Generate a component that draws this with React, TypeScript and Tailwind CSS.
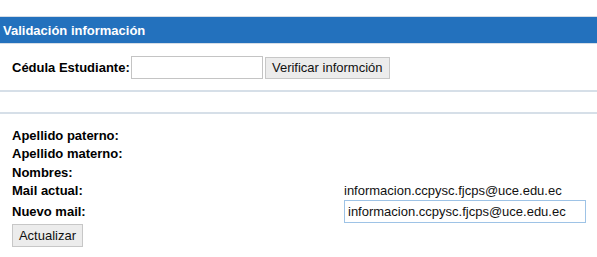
import React from "react";

export default function App() {
  const labels = ["Apellido paterno:", "Apellido materno:", "Nombres:", "Mail actual:"];
  return (
    <div className="w-[597px] h-[257px] bg-white text-[13px] leading-[15px] text-black" style={{ fontFamily: '"Liberation Sans", Arial, sans-serif' }}>
      <div className="h-[16px]" />
      <div className="border-t border-b border-[#d5dde6] bg-[#2371bd] h-[28px] flex items-center px-[3px]">
        <span className="font-bold text-white">Validación información</span>
      </div>
      <div className="h-[46px] flex items-center pl-[12px] pt-[1px]">
        <span className="font-bold">Cédula Estudiante:</span>
        <input className="ml-[1px] w-[132px] h-[23px] border border-[#c4c4c4] bg-white outline-none" />
        <button className="ml-[2px] w-[125px] h-[22px] border border-[#c7c7c7] bg-[#ececec] text-[13px] text-[#111]">Verificar informción</button>
      </div>
      <div className="h-[2px] bg-[#d6dfe8]" />
      <div className="h-[20px]" />
      <div className="h-[2px] bg-[#d6dfe8]" />
      <div className="pl-[12px] pt-[12px] flex flex-col">
        {labels.map((l, i) => (
          <div key={l} className="flex h-[18.5px] items-center">
            <span className="font-bold w-[332px]">{l}</span>
            {i === 3 && <span className="text-[#111]">informacion.ccpysc.fjcps@uce.edu.ec</span>}
          </div>
        ))}
        <div className="flex items-center h-[23px]">
          <span className="font-bold w-[332px]">Nuevo mail:</span>
          <input
            className="w-[242px] h-[23px] border border-[#9ec3e6] px-[3px] text-[13px] text-[#111] outline-none"
            defaultValue="informacion.ccpysc.fjcps@uce.edu.ec"
            style={{ fontFamily: '"Liberation Sans", Arial, sans-serif' }}
          />
        </div>
        <div className="pt-[1px]">
          <button className="w-[71px] h-[23px] border border-[#c7c7c7] bg-[#ececec] text-[13px] text-[#111]">Actualizar</button>
        </div>
      </div>
    </div>
  );
}
